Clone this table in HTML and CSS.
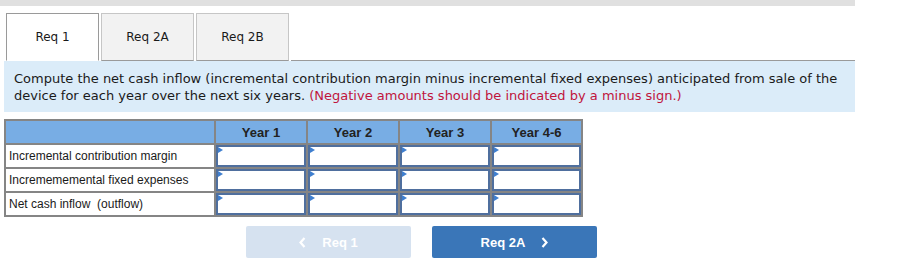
FILE: index.html
```html
<!DOCTYPE html>
<html lang="en">
<head>
<meta charset="utf-8">
<title>Req 1</title>
<link rel="stylesheet" href="styles.css">
</head>
<body>
<div class="page">
  <div class="topbar"></div>
  <div class="tabs">
    <div class="tab active">Req 1</div>
    <div class="tab">Req 2A</div>
    <div class="tab">Req 2B</div>
    <div class="tab-rest"></div>
  </div>
  <div class="prompt">
    <span>Compute the net cash inflow (incremental contribution margin minus incremental fixed expenses) anticipated from sale of the</span><br>
    <span>device for each year over the next six years.</span> <span class="note">(Negative amounts should be indicated by a minus sign.)</span>
  </div>
  <div class="grid">
    <div class="head"></div>
    <div class="head">Year 1</div>
    <div class="head">Year 2</div>
    <div class="head">Year 3</div>
    <div class="head">Year 4-6</div>

    <div class="label">Incremental contribution margin</div>
    <div class="box"></div><div class="box"></div><div class="box"></div><div class="box"></div>

    <div class="label">Incremememental fixed expenses</div>
    <div class="box"></div><div class="box"></div><div class="box"></div><div class="box"></div>

    <div class="label">Net cash inflow &nbsp;(outflow)</div>
    <div class="box"></div><div class="box"></div><div class="box"></div><div class="box"></div>
  </div>
  <div class="nav">
    <button class="btn prev" disabled>
      <svg class="chev" width="7" height="11" viewBox="0 0 7 11"><polyline points="5.5,1 1.5,5.5 5.5,10" fill="none" stroke="currentColor" stroke-width="2.2"/></svg>
      Req 1
    </button>
    <button class="btn next">
      Req 2A
      <svg class="chev" width="7" height="11" viewBox="0 0 7 11"><polyline points="1.5,1 5.5,5.5 1.5,10" fill="none" stroke="currentColor" stroke-width="2.2"/></svg>
    </button>
  </div>
</div>
</body>
</html>
```

FILE: styles.css
```css
html, body {
  margin: 0;
  padding: 0;
  background: #ffffff;
}

.page {
  width: 901px;
  height: 277px;
  font-family: "DejaVu Sans", Verdana, sans-serif;
}

.topbar {
  width: 855px;
  height: 6px;
  background: #e0e0e0;
}

.tabs {
  display: flex;
  align-items: flex-end;
  height: 48px;
  margin-top: 7px;
  padding-left: 6px;
  width: 849px;
}

.tab {
  box-sizing: border-box;
  width: 93px;
  height: 48px;
  margin-right: 2px;
  border: 1px solid #c6c6c6;
  border-bottom: 1px solid #9a9a9a;
  background: #f2f2f2;
  display: flex;
  align-items: center;
  justify-content: center;
  font-size: 12px;
  color: #1a1a1a;
}

.tab.active {
  background: #ffffff;
  border-color: #9a9a9a;
  border-bottom-color: #ffffff;
}

.tab-rest {
  flex: 1;
  height: 1px;
  background: #9a9a9a;
}

.prompt {
  margin-left: 4px;
  width: 851px;
  box-sizing: border-box;
  height: 51px;
  background: #dbecf9;
  padding: 9px 10px 0 10px;
  font-size: 13px;
  line-height: 17px;
  color: #1a1a1a;
  white-space: nowrap;
}

.note {
  color: #c0143c;
}

.grid {
  margin: 7px 0 0 4px;
  width: max-content;
  display: grid;
  grid-template-columns: 208px 90px 90px 90px 89px;
  grid-auto-rows: 22px;
  gap: 2px;
  padding: 2px;
  background: #858585;
  font-family: "Liberation Sans", Arial, sans-serif;
}

.head {
  background: #78ade4;
  font-weight: bold;
  font-size: 13px;
  color: #222;
  display: flex;
  align-items: center;
  justify-content: center;
}

.label {
  background: #fff;
  font-size: 12px;
  color: #1a1a1a;
  padding-left: 3px;
  display: flex;
  align-items: center;
}

.box {
  position: relative;
  box-sizing: border-box;
  border: 2px solid #4f6f9e;
  background: #fff;
}

/* small marker in the upper-left corner of each entry box */
.box::before {
  content: "";
  position: absolute;
  left: 0;
  top: 0;
  border-left: 5px solid #3f7fcf;
  border-top: 3px solid transparent;
  border-bottom: 3px solid transparent;
}

.nav {
  display: flex;
  gap: 21px;
  margin: 9px 0 0 246px;
}

.btn {
  width: 165px;
  height: 32px;
  border: none;
  border-radius: 2px;
  font-family: "Liberation Sans", Arial, sans-serif;
  font-size: 13px;
  font-weight: bold;
  color: #fff;
  display: flex;
  align-items: center;
  justify-content: center;
  gap: 16px;
  padding: 0;
}

.btn.prev {
  background: #d6e2f0;
}

.btn.next {
  background: #3a76b8;
}
```
